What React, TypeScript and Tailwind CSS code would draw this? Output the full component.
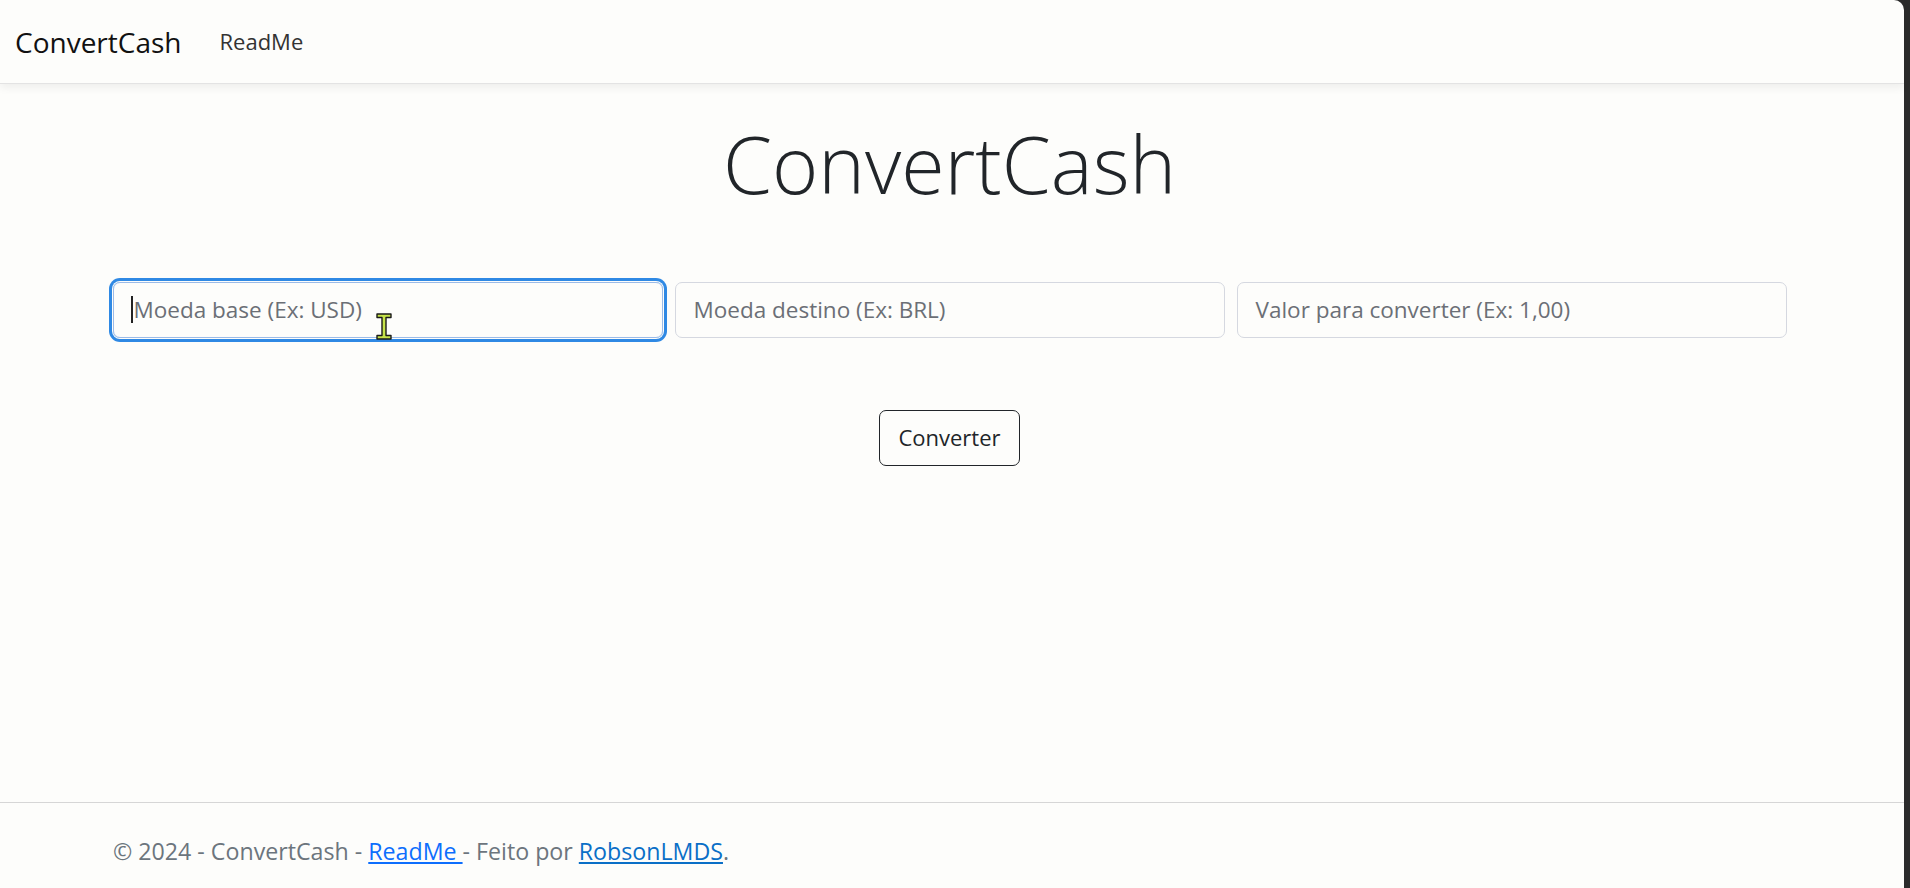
import React from "react"

const font = { fontFamily: '"Open Sans", "Noto Sans", "Liberation Sans", sans-serif' }

function IBeam() {
  return (
    <svg width="18" height="27" viewBox="0 0 18 27" className="absolute left-[262px] top-[31px] pointer-events-none">
      <path
        d="M2 1h14v3.5h-5v18h5V26H2v-3.5h5v-18H2z"
        fill="#c6e34a"
        stroke="#1a1a1a"
        strokeWidth="1.4"
        strokeLinejoin="round"
      />
    </svg>
  )
}

export default function App() {
  return (
    <div className="flex h-[888px] w-[1910px] overflow-hidden bg-[#2b2b2b]" style={font}>
      <div className="flex flex-1 flex-col rounded-tr-[10px] bg-[#fdfdfb]">
        {/* Navbar */}
        <nav className="flex h-[84px] items-center gap-[38px] border-b border-[#e3e3e3] px-[15px] shadow-[0_4px_8px_rgba(0,0,0,0.06)]">
          <span className="text-[28px] text-[#111]">ConvertCash</span>
          <span className="text-[22px] text-[#333]">ReadMe</span>
        </nav>

        {/* Main */}
        <main className="flex-1 pr-[5px]">
          <div className="mx-auto w-[1674px]">
            <h1 className="mt-[33px] text-center text-[79px] font-light leading-[1.2] text-[#212529]">ConvertCash</h1>

            <div className="mt-[70px] grid grid-cols-3 gap-[12px]">
              <div className="relative">
                <div className="flex h-[56px] items-center rounded-[7px] border border-[#9bbbe8] px-[17px] shadow-[0_0_0_1px_#fdfdfb,0_0_0_4px_#2f89e4]">
                  <span className="mr-[1px] h-[27px] w-[2px] bg-[#222]" />
                  <span className="text-[22.5px] text-[#6b6f76]">Moeda base (Ex: USD)</span>
                </div>
                <IBeam />
              </div>
              <div className="flex h-[56px] items-center rounded-[7px] border border-[#d5d8e0] px-[18px]">
                <span className="text-[22.5px] text-[#6b6f76]">Moeda destino (Ex: BRL)</span>
              </div>
              <div className="flex h-[56px] items-center rounded-[7px] border border-[#d5d8e0] px-[18px]">
                <span className="text-[22.5px] text-[#6b6f76]">Valor para converter (Ex: 1,00)</span>
              </div>
            </div>

            <div className="mt-[72px] flex justify-center">
              <button className="h-[56px] rounded-[7px] border border-[#212529] px-[18px] text-[22px] text-[#212529]">
                Converter
              </button>
            </div>
          </div>
        </main>

        {/* Footer */}
        <footer className="h-[86px] border-t border-[#d6d6d6] pl-[113px] pt-[31px]">
          <p className="text-[23.2px] text-[#6c757d]">
            © 2024 - ConvertCash -{" "}
            <a className="text-[#0d6efd] underline">ReadMe </a>- Feito por{" "}
            <a className="text-[#0a6fc7] underline">RobsonLMDS</a>.
          </p>
        </footer>
      </div>
      <div className="w-[6px]" />
    </div>
  )
}
